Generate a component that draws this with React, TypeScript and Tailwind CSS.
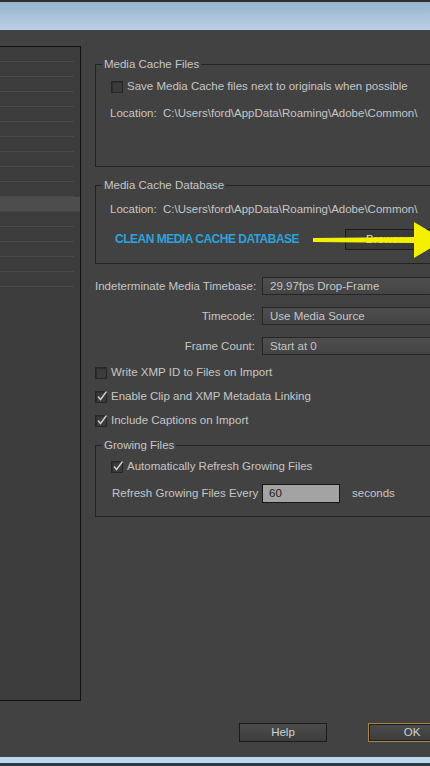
import React from "react";

const rows = Array.from({ length: 16 }, (_, i) => i);

const Check = ({ checked }: { checked?: boolean }) => (
  <span className="relative inline-block w-[12px] h-[12px] shrink-0 border border-[#262626] bg-[#3b3b3b] shadow-[inset_1px_1px_0_#2e2e2e]">
    {checked && (
      <svg className="absolute left-[0px] top-[-2px]" width="12" height="12" viewBox="0 0 12 12">
        <path d="M2 6.5 L4.5 9.5 L10.5 1.5" fill="none" stroke="#cfcfcf" strokeWidth="1.4" />
      </svg>
    )}
  </span>
);

const Select = ({ label, value }: { label: string; value: string }) => (
  <div className="flex items-center h-[18px]">
    <span className="w-[161px] text-right pr-[1px] whitespace-nowrap">{label}</span>
    <div className="ml-[6px] w-[200px] h-[18px] flex items-center pl-[7px] border border-[#262626] bg-gradient-to-b from-[#4e4e4e] to-[#444444]">
      {value}
    </div>
  </div>
);

export default function App() {
  return (
    <div className="relative w-[430px] h-[766px] overflow-hidden flex flex-col bg-[#424242] text-[11.5px] leading-[13px] text-[#c6c6c6] font-['Liberation_Sans',Arial,sans-serif]">
      {/* window title strip */}
      <div className="h-[2px] bg-[#2e2e2e]" />
      <div className="h-[28px] bg-gradient-to-b from-[#97b3ce] to-[#bcd0e5]" />

      <div className="flex flex-1 min-h-0">
        {/* category list */}
        <div className="mt-[16px] w-[81px] h-[655px] shrink-0 border-t border-r border-b border-[#121212] bg-[#3c3c3c]">
          {rows.map((r) =>
            r === 10 ? (
              <div key={r} className="h-[15px] border-b border-[#454545] bg-[#4d4d4d]" />
            ) : (
              <div key={r} className="h-[15px] border-b border-[#4a4a4a] mr-[6px]" />
            )
          )}
        </div>

        <div className="ml-[14px] w-[380px] shrink-0 flex flex-col">
          <fieldset className="mt-[28px] h-[109px] border border-[#232323]">
            <legend className="ml-[6px] px-[2px] leading-[13px]">Media Cache Files</legend>
            <div className="mt-[9px] pl-[15px] flex items-center gap-[4px] h-[13px]">
              <Check />
              <span>Save Media Cache files next to originals when possible</span>
            </div>
            <div className="mt-[14px] pl-[14px] whitespace-nowrap">Location:&nbsp; C:\Users\ford\AppData\Roaming\Adobe\Common\</div>
          </fieldset>

          <fieldset className="mt-[12px] h-[85px] border border-[#232323]">
            <legend className="ml-[6px] px-[2px] leading-[13px]">Media Cache Database</legend>
            <div className="pt-[11px] pl-[14px] whitespace-nowrap">Location:&nbsp; C:\Users\ford\AppData\Roaming\Adobe\Common\</div>
            <div className="mt-[13px] flex items-center h-[21px]">
              <span className="ml-[19px] text-[12px] font-bold tracking-[-0.5px] text-[#2ba4dd] whitespace-nowrap">CLEAN MEDIA CACHE DATABASE</span>
              <div className="ml-[46px] w-[90px] h-[21px] shrink-0 flex items-center pl-[20px] border border-[#1c1c1c] bg-[#3a3a3a] text-[#e0e0e0]">
                Browse...
              </div>
            </div>
          </fieldset>

          <div className="mt-[13px] flex flex-col gap-[12px]">
            <Select label="Indeterminate Media Timebase:" value="29.97fps Drop-Frame" />
            <Select label="Timecode:" value="Use Media Source" />
            <Select label="Frame Count:" value="Start at 0" />
          </div>

          <div className="mt-[11px] flex flex-col gap-[11px]">
            <div className="flex items-center gap-[4px] h-[13px]">
              <Check />
              <span>Write XMP ID to Files on Import</span>
            </div>
            <div className="flex items-center gap-[4px] h-[13px]">
              <Check checked />
              <span>Enable Clip and XMP Metadata Linking</span>
            </div>
            <div className="flex items-center gap-[4px] h-[13px]">
              <Check checked />
              <span>Include Captions on Import</span>
            </div>
          </div>

          <fieldset className="mt-[12px] h-[78px] border border-[#232323]">
            <legend className="ml-[6px] px-[2px] leading-[13px]">Growing Files</legend>
            <div className="mt-[8px] pl-[15px] flex items-center gap-[4px] h-[13px]">
              <Check checked />
              <span>Automatically Refresh Growing Files</span>
            </div>
            <div className="mt-[11px] flex items-center h-[19px]">
              <span className="ml-[16px] w-[150px] whitespace-nowrap">Refresh Growing Files Every</span>
              <div className="w-[78px] h-[19px] flex items-center pl-[6px] border border-[#161616] bg-[#a3a3a3] text-[#1e1e1e]">
                60
              </div>
              <span className="ml-[12px]">seconds</span>
            </div>
          </fieldset>

          <div className="mt-auto mb-[15px] flex">
            <button className="ml-[144px] w-[88px] h-[19px] border border-[#1a1a1a] bg-gradient-to-b from-[#4c4c4c] to-[#3d3d3d] text-[#d2d2d2]">
              Help
            </button>
            <button className="ml-[41px] w-[88px] h-[19px] border border-[#a8873f] shadow-[inset_0_0_0_1px_#1e1e1e] bg-gradient-to-b from-[#4c4c4c] to-[#3d3d3d] text-[#d2d2d2]">
              OK
            </button>
          </div>
        </div>
      </div>

      <div className="h-[6px] bg-[#bdd7ee]" />
      <div className="h-[3px] bg-[#2b3a44]" />

      {/* yellow annotation arrow */}
      <svg className="absolute left-[310px] top-[218px]" width="140" height="44" viewBox="0 0 140 44">
        <path d="M3 20 L104 19 L104 4 L134 22 L104 40 L104 25 L3 24 Z" fill="#f5f000" />
      </svg>
    </div>
  );
}
